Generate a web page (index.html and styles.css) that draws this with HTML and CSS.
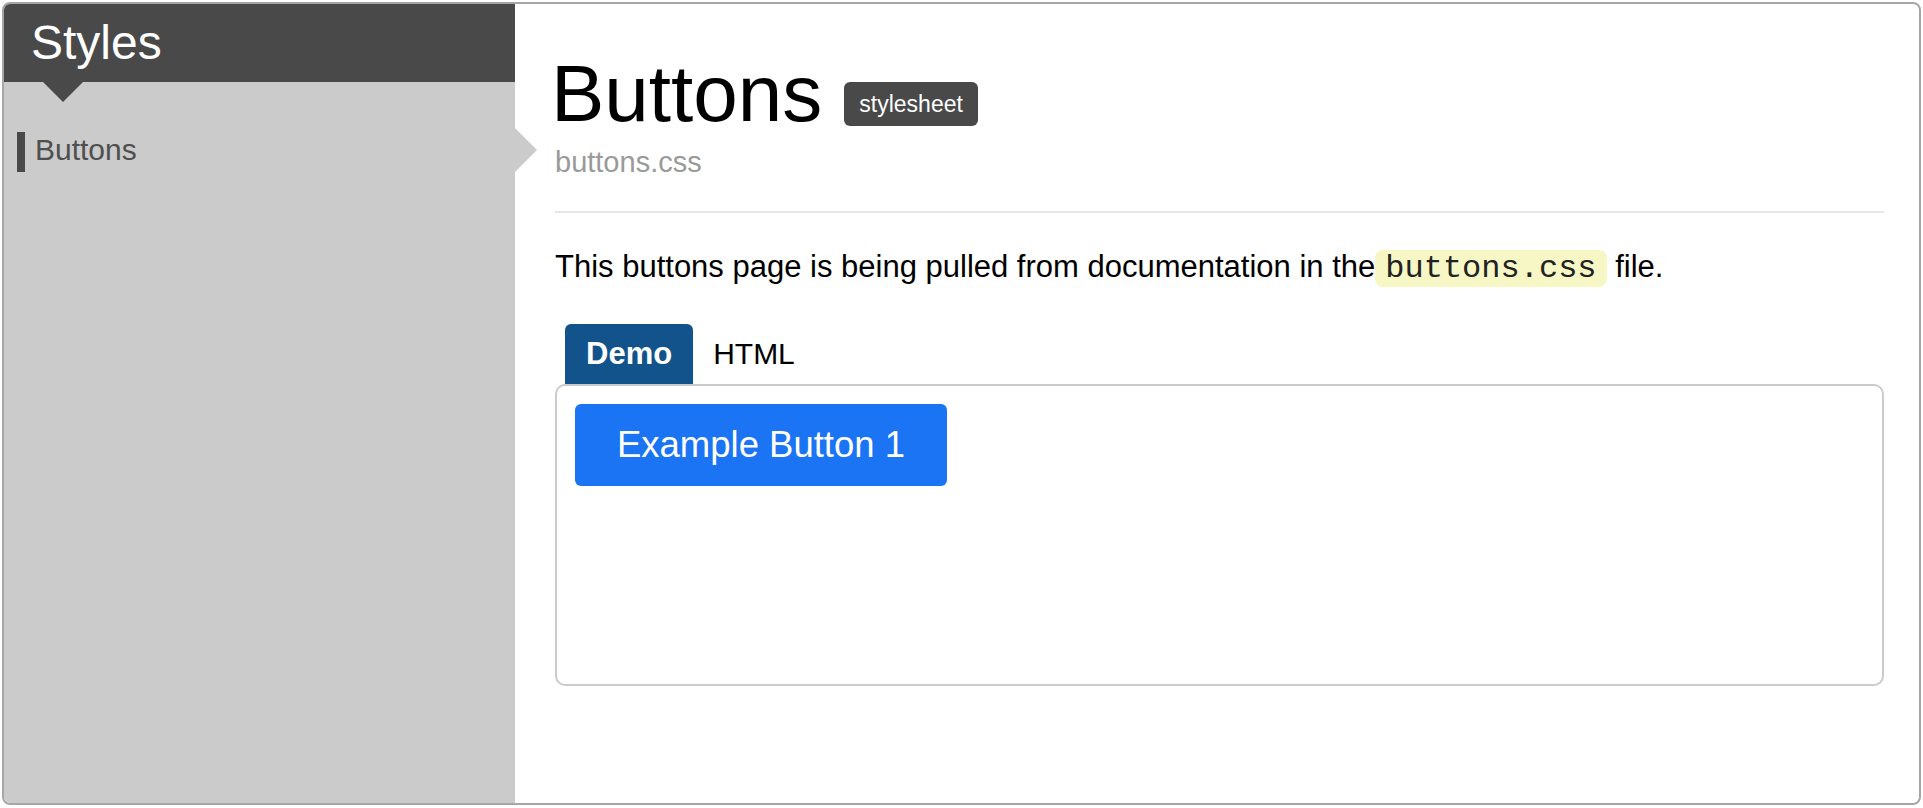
FILE: index.html
```html
<!DOCTYPE html>
<html lang="en">
<head>
<meta charset="utf-8">
<title>Styles – Buttons</title>
<link rel="stylesheet" href="styles.css">
</head>
<body>
<div class="frame">
  <aside class="sidebar">
    <div class="sidebar-header">Styles</div>
    <nav class="nav">
      <a class="nav-item" href="#">Buttons</a>
    </nav>
  </aside>
  <main class="main">
    <div class="title-row">
      <h1 class="title">Buttons</h1>
      <span class="badge">stylesheet</span>
    </div>
    <div class="subtitle">buttons.css</div>
    <hr class="rule">
    <p class="intro">This buttons page is being pulled from documentation in the<code class="code">buttons.css</code> file.</p>
    <div class="tabs">
      <span class="tab tab-active">Demo</span>
      <span class="tab">HTML</span>
    </div>
    <div class="panel">
      <button class="example-btn" type="button">Example Button 1</button>
    </div>
  </main>
</div>
</body>
</html>
```
FILE: styles.css
```css
html, body {
  margin: 0;
  padding: 0;
  background: #ffffff;
}

body {
  font-family: "Helvetica Neue", Helvetica, "Liberation Sans", Arial, sans-serif;
  color: #000;
}

.frame {
  box-sizing: border-box;
  margin: 2px 2px 0 2px;
  height: 803px;
  border: 2px solid #a6a6a6;
  border-radius: 8px;
  overflow: hidden;
  display: flex;
  background: #fff;
}

.sidebar {
  width: 511px;
  flex: none;
  background: #cbcbcb;
}

.sidebar-header {
  position: relative;
  height: 78px;
  line-height: 78px;
  background: #494949;
  color: #fff;
  font-size: 48px;
  padding-left: 27px;
}

.sidebar-header::after {
  content: "";
  position: absolute;
  left: 39px;
  top: 78px;
  width: 0;
  height: 0;
  border-left: 20px solid transparent;
  border-right: 20px solid transparent;
  border-top: 20px solid #494949;
}

.nav {
  padding-top: 50px;
  display: flex;
  flex-direction: column;
}

.nav-item {
  margin-left: 13px;
  border-left: 8px solid #494949;
  padding: 0 0 4px 10px;
  line-height: 36px;
  font-size: 30px;
  color: #4f4f4f;
  text-decoration: none;
}

.main {
  position: relative;
  flex: 1;
  padding: 50px 35px 0 40px;
}

.main::before {
  content: "";
  position: absolute;
  left: 0;
  top: 124px;
  width: 0;
  height: 0;
  border-top: 22px solid transparent;
  border-bottom: 22px solid transparent;
  border-left: 22px solid #cbcbcb;
}

.title-row {
  display: flex;
  align-items: flex-start;
  gap: 22px;
}

.title {
  margin: 0 0 0 -4px;
  font-size: 80px;
  line-height: 80px;
  font-weight: normal;
}

.badge {
  margin-top: 28px;
  height: 44px;
  line-height: 44px;
  padding: 0 15px;
  border-radius: 6px;
  background: #494949;
  color: #fff;
  font-size: 23px;
}

.subtitle {
  margin-top: 8px;
  font-size: 29px;
  line-height: 40px;
  color: #9a9a9a;
}

.rule {
  margin: 29px 0 0 0;
  border: 0;
  height: 2px;
  background: #e8e8e8;
}

.intro {
  margin: 34px 0 0 0;
  font-size: 31px;
  line-height: 40px;
}

.code {
  font-family: "Liberation Mono", "Courier New", monospace;
  font-size: 32px;
  color: #222;
  background: #f7f7c6;
  border-radius: 8px;
  padding: 0 10px;
}

.tabs {
  margin: 35px 0 0 10px;
  display: flex;
}

.tab {
  height: 60px;
  line-height: 60px;
  padding: 0 20px;
  font-size: 30px;
}

.tab-active {
  padding: 0 21px;
  background: #13538b;
  color: #fff;
  font-weight: bold;
  font-size: 31px;
  border-radius: 6px 6px 0 0;
}

.panel {
  box-sizing: border-box;
  height: 302px;
  border: 2px solid #cbcbcb;
  border-radius: 10px;
  padding: 18px;
}

.example-btn {
  display: block;
  box-sizing: border-box;
  width: 372px;
  height: 82px;
  border: 0;
  margin: 0;
  padding: 0;
  border-radius: 6px;
  background: #1b74f4;
  color: #fff;
  font: inherit;
  font-size: 36.5px;
  line-height: 82px;
  text-align: center;
}
```
